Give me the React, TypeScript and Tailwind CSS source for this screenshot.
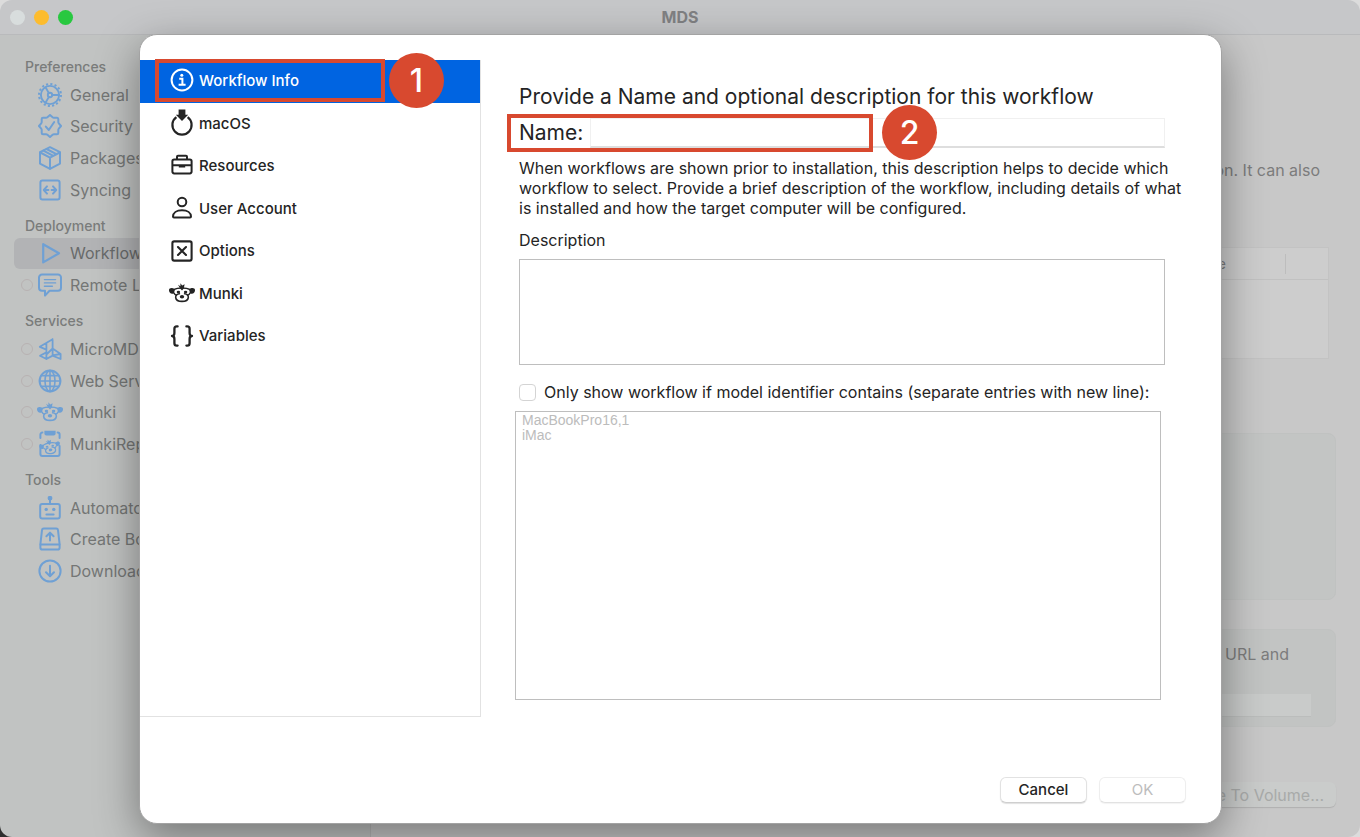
import type { ReactNode } from "react";

type IconProps = { className?: string };

function Glyph({ className = "size-6", children, width = 2 }: { className?: string; children: ReactNode; width?: number }) {
  return (
    <svg
      viewBox="0 0 24 24"
      className={className}
      fill="none"
      stroke="currentColor"
      strokeWidth={width}
      strokeLinecap="round"
      strokeLinejoin="round"
      aria-hidden="true"
    >
      {children}
    </svg>
  );
}

function GearIcon({ className }: IconProps) {
  return (
    <Glyph className={className} width={1.9}>
      <circle cx="12" cy="12" r="9.1" />
      <circle cx="12" cy="12" r="11" strokeWidth="2" strokeLinecap="butt" strokeDasharray="2.1 2.22" />
      <circle cx="12" cy="12" r="2.2" />
      <path d="M14.2 12H21M10.9 10.1 7.5 4.2M10.9 13.9 7.5 19.8" />
    </Glyph>
  );
}

function SealIcon({ className }: IconProps) {
  return (
    <Glyph className={className}>
      <path d="M12 1 14.6 3.3 Q15.2 3.8 16 3.7 L19.1 3.7 Q20.3 3.8 20.3 5 L20.3 8 Q20.3 8.8 20.8 9.4 L23 12 20.8 14.6 Q20.3 15.2 20.3 16 L20.3 19 Q20.3 20.3 19 20.3 L16 20.3 Q15.2 20.3 14.6 20.8 L12 23 9.4 20.8 Q8.8 20.3 8 20.3 L5 20.3 Q3.7 20.3 3.7 19 L3.7 16 Q3.7 15.2 3.2 14.6 L1 12 3.2 9.4 Q3.7 8.8 3.7 8 L3.7 5 Q3.7 3.7 5 3.7 L8 3.7 Q8.8 3.7 9.4 3.2Z" />
      <path d="m7.8 12.6 3 3.4 5.4-8" />
    </Glyph>
  );
}

function BoxIcon({ className }: IconProps) {
  return (
    <Glyph className={className}>
      <path d="M12 1.2 22 6.2V17.6L12 22.9 2 17.6V6.2Z" />
      <path d="M2.3 6.5 12 11.6l9.7-5.1M12 11.6v11M5.4 4.6l9.9 5.2M8.6 3l9.8 5.2" />
    </Glyph>
  );
}

function SyncIcon({ className }: IconProps) {
  return (
    <Glyph className={className}>
      <rect x="2.4" y="2.4" width="19.2" height="19.2" rx="2" />
      <path d="M9 8.4 5.8 12 9 15.6M15 8.4l3.2 3.6-3.2 3.6M6 12h4.4M13.6 12H18" />
    </Glyph>
  );
}

function PlayIcon({ className }: IconProps) {
  return (
    <Glyph className={className} width={2.2}>
      <path d="M5.2 3.2 21 12.3 5.2 21.4Z" />
    </Glyph>
  );
}

function MessageIcon({ className }: IconProps) {
  return (
    <Glyph className={className}>
      <path d="M4 1.6h16a3 3 0 0 1 3 3v10.2a3 3 0 0 1-3 3h-8.5L7 22.6v-4.8H4a3 3 0 0 1-3-3V4.6a3 3 0 0 1 3-3Z" />
      <path strokeWidth="1.4" d="M6.4 6.6h11.2M6.4 9.9h11.2M6.4 13.2h8" />
    </Glyph>
  );
}

function MdmIcon({ className }: IconProps) {
  return (
    <Glyph className={className} width={1.8}>
      <path d="M14.6 2.2V11.5L22.6 17V22L14.6 18.6 8.4 22 2 18.8 8.4 15.4V6M14.6 2.2 1.8 9.8 8.4 12.6M8.4 12V22M14.6 11.5 8.4 17.5M14.6 11.5V18.4L22.6 17" />
    </Glyph>
  );
}

function GlobeIcon({ className }: IconProps) {
  return (
    <Glyph className={className} width={1.6}>
      <circle cx="12" cy="12" r="10.4" strokeWidth="2" />
      <ellipse cx="12" cy="12" rx="5" ry="10.4" />
      <path d="M12 1.6v20.8M1.6 12h20.8M3.4 6.6h17.2M3.4 17.4h17.2" />
    </Glyph>
  );
}

function MunkiFace() {
  return (
    <>
      <path fill="currentColor" stroke="none" d="M0 7.4C-.2 4.9 3.2 4.2 6 6.4L4.8 10.4C2 11.4.2 9.8 0 7.4ZM26 7.4C26.2 4.9 22.8 4.2 20 6.4L21.2 10.4C24 11.4 25.8 9.8 26 7.4Z" />
      <path fill="currentColor" stroke="none" d="M9 1.8 11.4 3.2 11.4.2 13.2 2.6 15.6 1.2 14.8 5.6 13 7.4 11.2 5.6Z" />
      <path strokeWidth="1.5" d="M5.4 6.4C8.4 4.4 17.6 4.4 20.6 6.4M5 10C5.6 11.4 6.4 12 7.4 12.2M21 10C20.4 11.4 19.6 12 18.6 12.2" />
      <ellipse cx="9.4" cy="9" rx="1.7" ry="1.2" fill="currentColor" stroke="none" />
      <ellipse cx="16.6" cy="9" rx="1.7" ry="1.2" fill="currentColor" stroke="none" />
      <path strokeWidth="1.6" d="M10.4 10.8C7.8 11 6.5 12.6 6.7 14.6C7 17.2 9.8 18.4 13 18.4S19 17.2 19.3 14.6C19.5 12.6 18.2 11 15.6 10.8" />
      <ellipse cx="13" cy="13.8" rx="2.2" ry="1.8" fill="currentColor" stroke="none" />
    </>
  );
}

function MunkiIcon({ className = "h-5 w-[26px]" }: IconProps) {
  return (
    <svg viewBox="0 0 26 20" className={className} fill="none" stroke="currentColor" strokeLinecap="round" aria-hidden="true">
      <MunkiFace />
    </svg>
  );
}

function MunkiReportIcon({ className }: IconProps) {
  return (
    <svg viewBox="0 0 24 28" className={className} fill="none" stroke="currentColor" strokeLinecap="round" aria-hidden="true">
      <path strokeWidth="2" d="M2.4 8V4.6a2 2 0 0 1 2-2M21.6 8V4.6a2 2 0 0 0-2-2M2.4 15v9a2 2 0 0 0 2 2h15.2a2 2 0 0 0 2-2v-8" />
      <path fill="currentColor" stroke="none" d="M6.4.8h11.2v2.6a2 2 0 0 1-2 2H8.4a2 2 0 0 1-2-2Z" />
      <g transform="translate(1.6 9) rotate(-10 10 8) scale(.8)">
        <MunkiFace />
      </g>
    </svg>
  );
}

function RobotIcon({ className }: IconProps) {
  return (
    <Glyph className={className}>
      <rect x="2.2" y="8" width="19.6" height="14.6" rx="2" />
      <path d="M12 3v5M8.4 18.6h7.2" />
      <circle cx="12" cy="2.2" r="1.4" fill="currentColor" />
      <circle cx="8.2" cy="13.4" r="1.7" fill="currentColor" stroke="none" />
      <circle cx="15.8" cy="13.4" r="1.7" fill="currentColor" stroke="none" />
    </Glyph>
  );
}

function DriveIcon({ className }: IconProps) {
  return (
    <Glyph className={className}>
      <path d="M5.8 1.6h12.4a1.8 1.8 0 0 1 1.8 1.6l1.6 14v3.6a1.8 1.8 0 0 1-1.8 1.8H4.2a1.8 1.8 0 0 1-1.8-1.8v-3.6l1.6-14a1.8 1.8 0 0 1 1.8-1.6Z" />
      <path d="M2.6 17.4h18.8M12 13.6V6M8.4 9.2 12 5.6l3.6 3.6" />
    </Glyph>
  );
}

function DownloadIcon({ className }: IconProps) {
  return (
    <Glyph className={className}>
      <circle cx="12" cy="12" r="10.6" />
      <path d="M12 6.8V17M8 13.2l4 4 4-4" />
    </Glyph>
  );
}

function InfoIcon({ className }: IconProps) {
  return (
    <Glyph className={className}>
      <circle cx="12" cy="12" r="10.4" />
      <circle cx="11.8" cy="7.2" r="1.5" fill="currentColor" stroke="none" />
      <path strokeLinecap="butt" strokeLinejoin="miter" d="M9.2 10.8h3.2v6M8.6 16.8h7" />
    </Glyph>
  );
}

function MacosIcon({ className = "h-7 w-6" }: IconProps) {
  return (
    <svg viewBox="0 0 24 28" className={className} fill="none" stroke="currentColor" strokeWidth="2.2" aria-hidden="true">
      <path d="M6.4 8.2A9.6 9.6 0 1 0 17.6 8.2" />
      <path fill="currentColor" stroke="none" d="M8.6.4h6.8v5.4h2.8L12 12 5.8 5.8h2.8Z" />
    </svg>
  );
}

function BriefcaseIcon({ className }: IconProps) {
  return (
    <Glyph className={className}>
      <rect x="2.4" y="6.4" width="19.2" height="14" rx="1.8" />
      <path strokeLinecap="butt" d="M7 6.2V3.8a1 1 0 0 1 1-1h8a1 1 0 0 1 1 1v2.4M2.4 12.2h19.2" />
      <path strokeWidth="2.4" strokeLinecap="butt" d="M8.8 13.4h6.4" />
    </Glyph>
  );
}

function UserIcon({ className }: IconProps) {
  return (
    <Glyph className={className}>
      <circle cx="12" cy="6" r="4.3" />
      <path d="M3 20.6c0-3.8 3.6-6.4 9-6.4s9 2.6 9 6.4a1 1 0 0 1-1 1H4a1 1 0 0 1-1-1Z" />
    </Glyph>
  );
}

function OptionsIcon({ className }: IconProps) {
  return (
    <Glyph className={className} width={2.1}>
      <rect x="2.4" y="2.4" width="19.2" height="19.2" rx="1.8" />
      <path d="m8 8 8 8M16 8l-8 8" />
    </Glyph>
  );
}

function BracesIcon({ className }: IconProps) {
  return (
    <Glyph className={className} width={2.3}>
      <path d="M7.6 2.4H6.8Q4.4 2.4 4.4 4.8V9Q4.4 12 2 12Q4.4 12 4.4 15V19.2Q4.4 21.6 6.8 21.6H7.6M16.4 2.4h.8Q19.6 2.4 19.6 4.8V9Q19.6 12 22 12Q19.6 12 19.6 15V19.2Q19.6 21.6 17.2 21.6H16.4" />
    </Glyph>
  );
}

type SidebarRow = { heading: string } | { label: string; icon: ReactNode; status?: boolean; selected?: boolean };

const sidebarRows: SidebarRow[] = [
  { heading: "Preferences" },
  { label: "General", icon: <GearIcon /> },
  { label: "Security", icon: <SealIcon /> },
  { label: "Packages", icon: <BoxIcon /> },
  { label: "Syncing", icon: <SyncIcon /> },
  { heading: "Deployment" },
  { label: "Workflows", icon: <PlayIcon />, selected: true },
  { label: "Remote Logs", icon: <MessageIcon />, status: true },
  { heading: "Services" },
  { label: "MicroMDM", icon: <MdmIcon />, status: true },
  { label: "Web Server", icon: <GlobeIcon />, status: true },
  { label: "Munki", icon: <MunkiIcon />, status: true },
  { label: "MunkiReport", icon: <MunkiReportIcon className="h-7 w-6" />, status: true },
  { heading: "Tools" },
  { label: "Automaton", icon: <RobotIcon /> },
  { label: "Create Boot", icon: <DriveIcon /> },
  { label: "Download", icon: <DownloadIcon /> },
];

const steps: { label: string; icon: ReactNode }[] = [
  { label: "Workflow Info", icon: <InfoIcon /> },
  { label: "macOS", icon: <MacosIcon /> },
  { label: "Resources", icon: <BriefcaseIcon /> },
  { label: "User Account", icon: <UserIcon /> },
  { label: "Options", icon: <OptionsIcon /> },
  { label: "Munki", icon: <MunkiIcon /> },
  { label: "Variables", icon: <BracesIcon /> },
];

function Sidebar() {
  return (
    <nav aria-label="Sections" className="w-[371px] shrink-0 border-r border-[#b8b8b8] bg-[#c1c3c2] px-3.5 pt-3">
      <ul className="grid h-[540px] grid-rows-[repeat(17,minmax(0,1fr))] text-[#747675]">
        {sidebarRows.map((row) =>
          "heading" in row ? (
            <li key={row.heading} className="flex items-center pt-2 pl-[11px] text-sm font-medium text-[#7a7c7b]">
              {row.heading}
            </li>
          ) : (
            <li key={row.label} className="flex text-base">
              <a
                href="#"
                className={
                  row.selected
                    ? "flex flex-1 items-center rounded-md bg-[#b2b3b5] pl-[7px] text-[#686a6a]"
                    : "flex flex-1 items-center pl-[7px]"
                }
              >
                <span className={row.status ? "size-3 rounded-full border border-[#b8b2b2]" : "size-3"} />
                <span className="mx-[3px] flex w-[28px] shrink-0 justify-center text-[#6fa0d4]">{row.icon}</span>
                <span className="pl-[3px]">{row.label}</span>
              </a>
            </li>
          ),
        )}
      </ul>
    </nav>
  );
}

function Background() {
  return (
    <main className="flex flex-1 flex-col items-end bg-[#c8c8c8] pr-6 text-base text-[#7c7c7c]">
      <p className="mt-[123px] mr-4 h-6 leading-6">installation. It can also</p>
      <div className="mt-[65px] mr-[7px] h-[112px] w-4/5 border border-[#c3c3c3] bg-[#cdcdcd]">
        <div className="flex h-8 items-center justify-end border-b border-[#c1c1c1] text-sm">
          <span className="pr-[59px]">Active</span>
          <span className="mr-[42px] h-5 w-px bg-[#bdbdbd]" />
        </div>
      </div>
      <div className="mt-[74px] h-[167px] w-4/5 rounded-lg border border-[#c0c2c1] bg-[#c3c5c4]" />
      <div className="mt-[29px] flex h-[98px] w-4/5 flex-col items-end rounded-lg border border-[#c0c2c1] bg-[#c2c4c3] pr-6">
        <p className="mt-3 mr-[22px] h-6 leading-6">URL and</p>
        <div className="mt-7 h-[23px] w-4/5 border-b border-[#bbbdbc] bg-[#c9cbca]" />
      </div>
      <button
        type="button"
        disabled
        className="mt-[55px] h-[25px] rounded-md bg-[#cacccb] px-3 text-base leading-6 text-[#a8aaa9] shadow-[0_1px_1px_rgba(0,0,0,0.12)]"
      >
        Save To Volume...
      </button>
    </main>
  );
}

function Marker({ children, className }: { children: ReactNode; className: string }) {
  return (
    <span
      className={`absolute flex size-[55px] items-center justify-center rounded-full bg-[#d8492f] text-[32px] font-medium text-white ${className}`}
    >
      {children}
    </span>
  );
}

function WorkflowDialog() {
  return (
    <div
      role="dialog"
      aria-label="Workflow Info"
      className="flex min-w-0 flex-1 flex-col rounded-[18px] border border-[#a3a3a3] bg-white text-[#242424] shadow-[0_14px_44px_rgba(0,0,0,0.4)]"
    >
      <div className="flex pt-[25px]">
        <nav aria-label="Workflow steps" className="h-[657px] w-[341px] shrink-0 border-r border-b border-[#e2e2e2]">
          <ul className="grid h-[298px] grid-rows-7 text-[15px] font-medium">
            {steps.map((step, index) => (
              <li key={step.label} className="relative flex">
                <a
                  href="#"
                  aria-current={index === 0 ? "step" : undefined}
                  className={
                    index === 0
                      ? "flex flex-1 items-center bg-[#0064e1] pb-0.5 pl-[29px] text-white"
                      : "flex flex-1 items-center pb-0.5 pl-[29px]"
                  }
                >
                  <span className="flex w-[26px] justify-center">{step.icon}</span>
                  <span className="pt-0.5 pl-1">{step.label}</span>
                </a>
                {index === 0 && (
                  <>
                    <span className="absolute -top-px right-[95px] bottom-px left-[15px] border-4 border-[#d8492f]" />
                    <Marker className="-top-[7px] right-9">1</Marker>
                  </>
                )}
              </li>
            ))}
          </ul>
        </nav>

        <form className="flex min-w-0 flex-1 flex-col pt-[23px] pr-14 pl-[38px] text-base leading-5">
          <h1 className="text-[21px] leading-7">Provide a Name and optional description for this workflow</h1>
          <div className="relative mt-[7px] flex h-[30px] items-center">
            <label htmlFor="workflow-name" className="w-[71px] text-[21px] leading-7">
              Name:
            </label>
            <input
              id="workflow-name"
              type="text"
              className="h-full min-w-0 flex-1 border border-b-2 border-[#f0f0f0] border-b-[#dedede] bg-white px-2 outline-none"
            />
            <span className="pointer-events-none absolute -top-1 -left-3 h-[38px] w-[366px] border-4 border-[#d8492f]" />
            <Marker className="-top-[13px] left-[363px]">2</Marker>
          </div>
          <p className="mt-2.5 whitespace-nowrap">
            When workflows are shown prior to installation, this description helps to decide which
            <br />
            workflow to select. Provide a brief description of the workflow, including details of what
            <br />
            is installed and how the target computer will be configured.
          </p>
          <label htmlFor="workflow-description" className="mt-3">
            Description
          </label>
          <textarea
            id="workflow-description"
            className="mt-[9px] h-[106px] resize-none border border-[#bebebe] px-1 outline-none"
          />
          <div className="mt-[17px] flex items-center whitespace-nowrap">
            <input
              id="model-filter"
              type="checkbox"
              className="size-[17px] appearance-none rounded border border-[#d4d4d4] bg-white"
            />
            <label htmlFor="model-filter" className="pl-2">
              Only show workflow if model identifier contains (separate entries with new line):
            </label>
          </div>
          <textarea
            aria-label="Model identifiers"
            disabled
            defaultValue={"MacBookPro16,1\niMac"}
            className="mt-[9px] mr-1 -ml-1 h-[289px] resize-none border border-[#bebebe] px-1.5 py-px font-['Liberation_Sans',sans-serif] text-sm leading-[15px] text-[#bcbcbc]"
          />
        </form>
      </div>

      <div className="mt-auto flex justify-end gap-3 pr-[35px] pb-5 leading-6">
        <button
          type="button"
          className="h-[26px] w-[87px] rounded-md border border-[#e2e2e2] border-b-[#cfcfcf] bg-white text-[15px] font-medium shadow-[0_1px_1px_rgba(0,0,0,0.12)]"
        >
          Cancel
        </button>
        <button
          type="button"
          disabled
          className="h-[26px] w-[87px] rounded-md border border-[#eeeeee] border-b-[#e2e2e2] bg-white text-[15px] text-[#bdbdbd] shadow-[0_1px_1px_rgba(0,0,0,0.05)]"
        >
          OK
        </button>
      </div>
    </div>
  );
}

export default function App() {
  return (
    <div className="relative flex min-h-screen flex-col bg-[#dcdcdc] font-['Inter',sans-serif]">
      <span className="absolute bottom-0 left-0 size-3 bg-[#2e2e2e]" />
      <div className="relative flex flex-1 flex-col overflow-hidden rounded-xl">
        <header className="grid h-[35px] grid-cols-3 items-center border-b border-[#b9babc] bg-[#c6c7c9] px-2.5">
          <div className="flex gap-[9px]">
            <button type="button" aria-label="Close" className="size-[15px] rounded-full bg-[#d8dddd]" />
            <button type="button" aria-label="Minimize" className="size-[15px] rounded-full bg-[#fdbc2e]" />
            <button type="button" aria-label="Zoom" className="size-[15px] rounded-full bg-[#28c840]" />
          </div>
          <span className="text-center text-base leading-5 font-bold text-[#808183]">MDS</span>
        </header>
        <div className="flex flex-1">
          <Sidebar />
          <Background />
        </div>
        <div className="absolute inset-0 flex pt-[34px] pr-[138px] pb-[13px] pl-[139px]">
          <WorkflowDialog />
        </div>
      </div>
    </div>
  );
}
